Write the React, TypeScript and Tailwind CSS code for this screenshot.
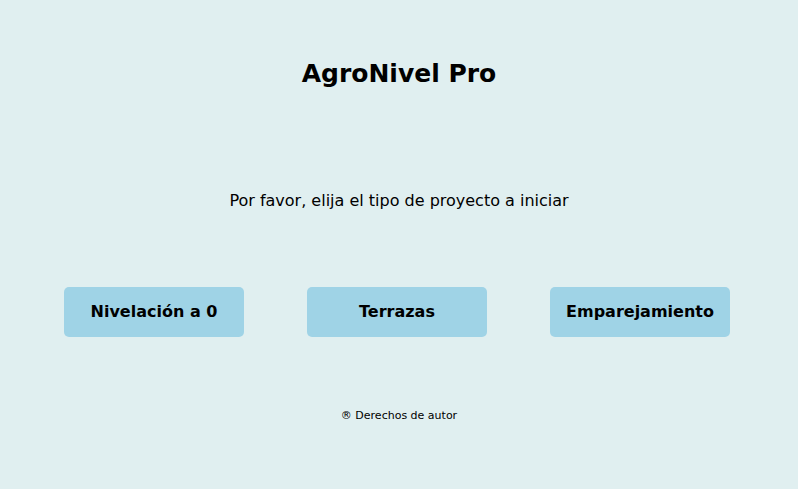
export default function App() {
  const options = ["Nivelación a 0", "Terrazas", "Emparejamiento"]

  return (
    <div className="min-h-[489px] w-full bg-[#e0eff0] text-black font-['DejaVu_Sans',sans-serif] flex flex-col items-center">
      <h1 className="mt-[58px] text-[25px] leading-[32px] font-bold">AgroNivel Pro</h1>

      <p className="mt-[101px] text-[16px] leading-[20px]">
        Por favor, elija el tipo de proyecto a iniciar
      </p>

      <div className="mt-[76px] flex justify-center gap-[63px] w-full pr-[4px]">
        {options.map((label) => (
          <button
            key={label}
            className="w-[180px] h-[50px] rounded-[5px] bg-[#9fd3e6] text-[16px] font-bold"
          >
            {label}
          </button>
        ))}
      </div>

      <footer className="mt-[71px] text-[11px] leading-[16px]">® Derechos de autor</footer>
    </div>
  )
}
